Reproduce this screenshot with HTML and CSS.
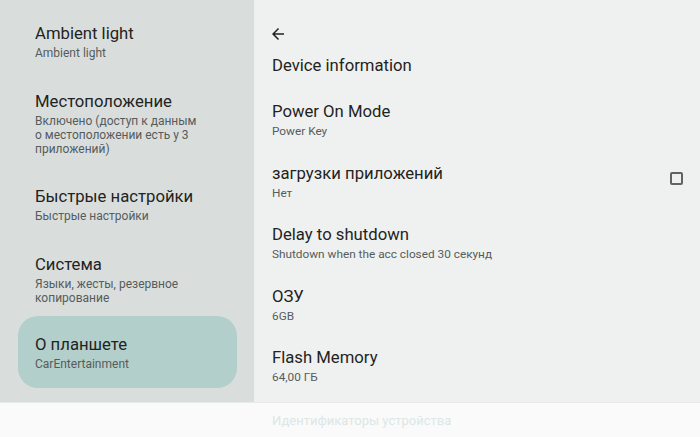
FILE: index.html
```html
<!DOCTYPE html>
<html lang="ru">
<head>
<meta charset="utf-8">
<title>Device information</title>
<link rel="stylesheet" href="styles.css">
</head>
<body>
<div class="app">
  <div class="main">
    <nav class="nav">
      <div class="nav-item">
        <div class="title">Ambient light</div>
        <div class="sub">Ambient light</div>
      </div>
      <div class="nav-item">
        <div class="title">Местоположение</div>
        <div class="sub">Включено (доступ к данным<br>о местоположении есть у 3<br>приложений)</div>
      </div>
      <div class="nav-item">
        <div class="title">Быстрые настройки</div>
        <div class="sub">Быстрые настройки</div>
      </div>
      <div class="nav-item">
        <div class="title">Система</div>
        <div class="sub">Языки, жесты, резервное<br>копирование</div>
      </div>
      <div class="nav-item active">
        <div class="title">О планшете</div>
        <div class="sub">CarEntertainment</div>
      </div>
    </nav>
    <section class="detail">
      <div class="back">
        <svg viewBox="0 0 24 24" width="18" height="18"><path d="M20 11H7.83l5.59-5.59L12 4l-8 8 8 8 1.41-1.41L7.83 13H20v-2z" fill="#1f2322"/></svg>
      </div>
      <div class="header">Device information</div>
      <div class="row">
        <div class="text">
          <div class="title">Power On Mode</div>
          <div class="rsub">Power Key</div>
        </div>
      </div>
      <div class="row">
        <div class="text">
          <div class="title">загрузки приложений</div>
          <div class="rsub">Нет</div>
        </div>
        <span class="check"></span>
      </div>
      <div class="row">
        <div class="text">
          <div class="title">Delay to shutdown</div>
          <div class="rsub">Shutdown when the acc closed 30 секунд</div>
        </div>
      </div>
      <div class="row">
        <div class="text">
          <div class="title">ОЗУ</div>
          <div class="rsub">6GB</div>
        </div>
      </div>
      <div class="row">
        <div class="text">
          <div class="title">Flash Memory</div>
          <div class="rsub">64,00 ГБ</div>
        </div>
      </div>
    </section>
  </div>
  <footer class="footer">Идентификаторы устройства</footer>
</div>
</body>
</html>
```
FILE: styles.css
```css
* { box-sizing: border-box; }
html, body { margin: 0; padding: 0; }
body {
  font-family: Roboto, "Noto Sans", "Liberation Sans", sans-serif;
  background: #fafafa;
  color: #1f2322;
}
.app {
  width: 700px;
  height: 437px;
  display: flex;
  flex-direction: column;
  overflow: hidden;
}
.main {
  height: 402px;
  display: flex;
  overflow: hidden;
}
.nav {
  width: 254px;
  flex: none;
  background: #d9dedd;
  padding: 7px 17px 0 18px;
}
.nav-item {
  padding: 16px 17px 14.5px;
}
.nav-item .sub {
  margin-top: 1px;
}
.nav-item.active {
  background: #b3cfcb;
  border-radius: 20px;
  padding: 18px 17px 17px;
  margin-top: -3px;
}
.title {
  font-size: 16.7px;
  line-height: 22px;
  color: #1f2322;
}
.sub {
  font-size: 12px;
  line-height: 14px;
  color: #565c5b;
}
.detail {
  flex: 1;
  background: #eff1f0;
  padding: 25px 17px 0 18px;
}
.back {
  height: 18px;
  margin-left: -3px;
  display: flex;
}
.header {
  margin-top: 12px;
  font-size: 16.7px;
  line-height: 22px;
  margin-bottom: 12px;
}
.row {
  display: flex;
  align-items: center;
  justify-content: space-between;
  padding: 12px 0 11.5px;
}
.rsub {
  font-size: 11.8px;
  line-height: 16px;
  color: #565c5b;
}
.check {
  width: 13px;
  height: 13px;
  border: 2px solid #5f6463;
  border-radius: 2px;
  margin-top: -7px;
}
.footer {
  height: 35px;
  border-top: 1px solid #e8eaea;
  padding-left: 272px;
  font-size: 13px;
  line-height: 36px;
  color: #dce7e6;
}
```
